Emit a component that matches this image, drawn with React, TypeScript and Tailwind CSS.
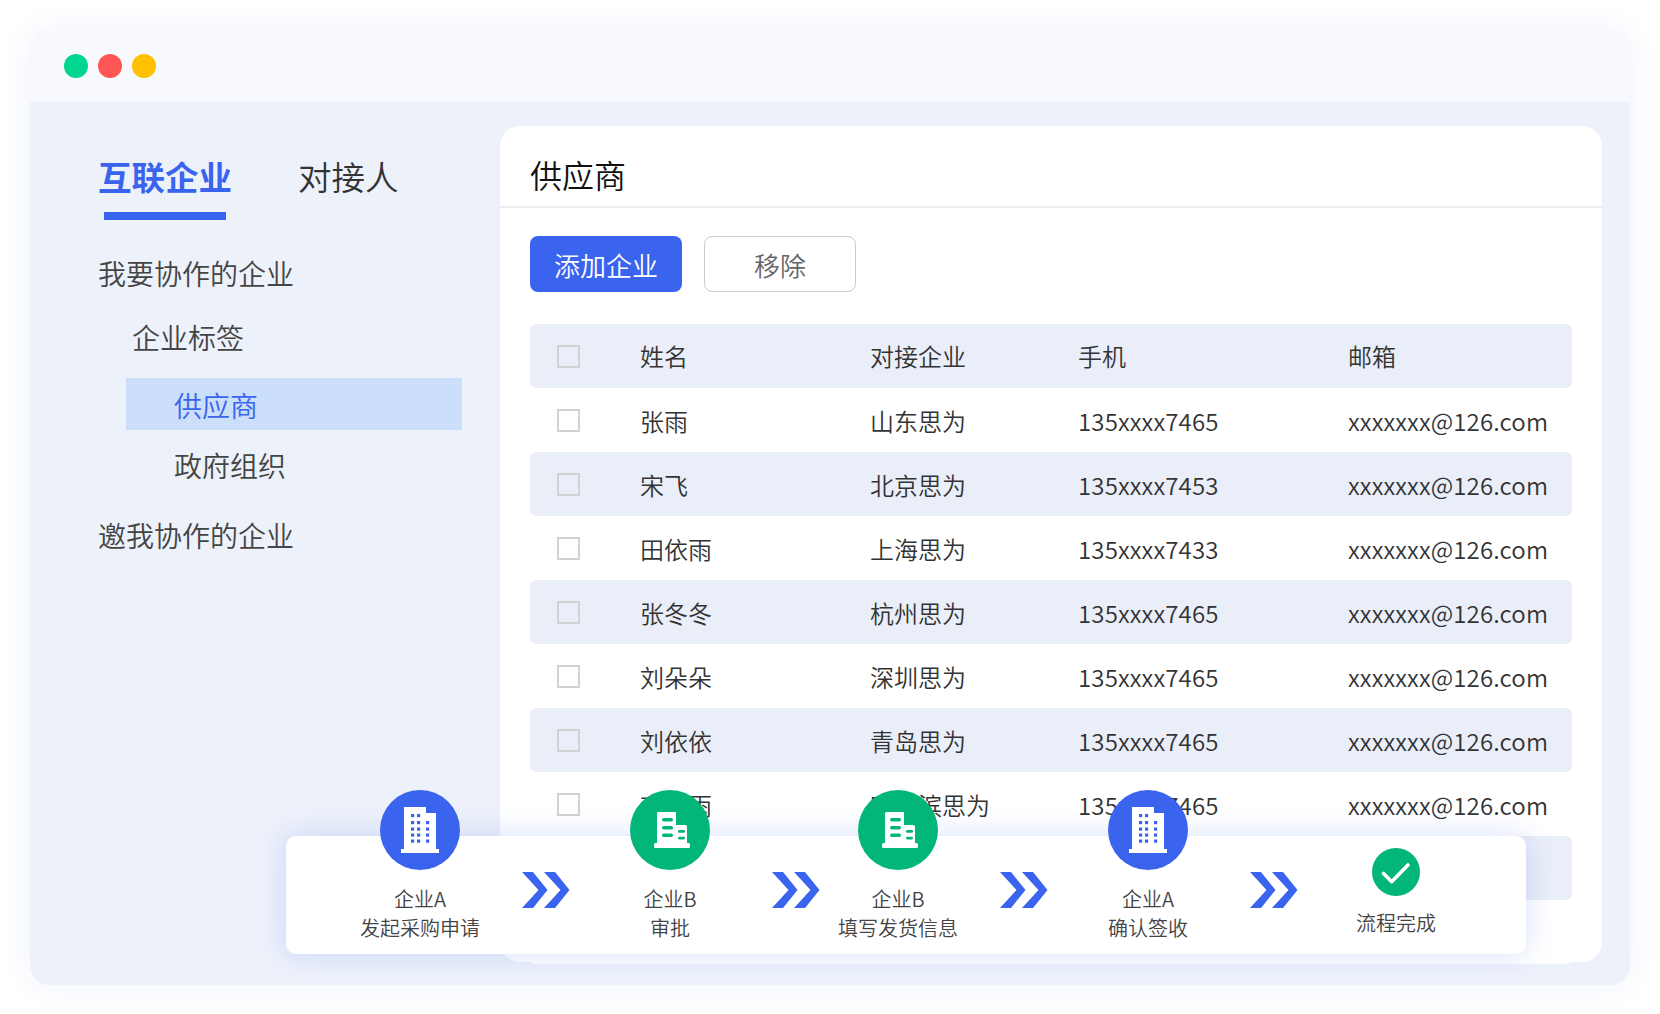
const rows = [
  { name: "张雨", company: "山东思为", phone: "135xxxx7465", email: "xxxxxxx@126.com" },
  { name: "宋飞", company: "北京思为", phone: "135xxxx7453", email: "xxxxxxx@126.com" },
  { name: "田依雨", company: "上海思为", phone: "135xxxx7433", email: "xxxxxxx@126.com" },
  { name: "张冬冬", company: "杭州思为", phone: "135xxxx7465", email: "xxxxxxx@126.com" },
  { name: "刘朵朵", company: "深圳思为", phone: "135xxxx7465", email: "xxxxxxx@126.com" },
  { name: "刘依依", company: "青岛思为", phone: "135xxxx7465", email: "xxxxxxx@126.com" },
  { name: "李依雨", company: "哈尔滨思为", phone: "135xxxx7465", email: "xxxxxxx@126.com" },
];

const rowGrid = "grid grid-cols-[110px_230px_208px_270px_1fr] items-center h-16 rounded-[6px] text-[24px]";

function Checkbox() {
  return <span className="block ml-[27px] w-[23px] h-[23px] border-2 border-[#d2d2d2] bg-transparent" />;
}

function TowerIcon() {
  const cells = [
    [31, 24], [37, 24],
    [31, 31], [37, 31], [46, 31],
    [31, 37.5], [37, 37.5], [46, 37.5],
    [31, 43.5], [37, 43.5], [46, 43.5],
    [31, 49.5], [37, 49.5], [46, 49.5],
  ];
  return (
    <svg viewBox="0 0 80 80" className="w-20 h-20">
      <circle cx="40" cy="40" r="40" fill="#3a64ee" />
      <path d="M24 17h22v6h10v36h3v4H21v-4h3z" fill="#fff" />
      {cells.map(([x, y]) => (
        <rect key={`${x}-${y}`} x={x} y={y} width="3.2" height="3.2" fill="#3a64ee" />
      ))}
    </svg>
  );
}

function OfficeIcon() {
  return (
    <svg viewBox="0 0 80 80" className="w-20 h-20">
      <circle cx="40" cy="40" r="40" fill="#02b578" />
      <path d="M27 23.5a1.5 1.5 0 0 1 1.5-1.5H46v13h9.5a1.5 1.5 0 0 1 1.5 1.5V53h1.5a1.5 1.5 0 0 1 1.5 1.5v2a1.5 1.5 0 0 1-1.5 1.5h-33a1.5 1.5 0 0 1-1.5-1.5v-2a1.5 1.5 0 0 1 1.5-1.5H27z" fill="#fff" />
      <rect x="32" y="28" width="11" height="3.4" rx="1.7" fill="#02b578" />
      <rect x="32" y="36" width="11" height="3.4" rx="1.7" fill="#02b578" />
      <rect x="32" y="43.5" width="11" height="3.6" rx="1.8" fill="#02b578" />
      <rect x="48" y="40" width="7" height="2.7" rx="1.3" fill="#02b578" />
      <rect x="48" y="46.7" width="7" height="2.7" rx="1.3" fill="#02b578" />
    </svg>
  );
}

function Chevrons({ className }: { className: string }) {
  return (
    <svg viewBox="0 0 48 36" className={`w-12 h-9 shrink-0 mt-[36px] ${className}`} fill="#3a64ee">
      <path d="M0 0h11l14.5 18L11 36H0l16.5-18z" />
      <path d="M22 0h11l14.5 18L33 36H22l16.5-18z" />
    </svg>
  );
}

function Step({ icon, lines, className }: { icon: React.ReactNode; lines: string[]; className: string }) {
  return (
    <div className={`w-40 shrink-0 flex flex-col items-center -mt-[46px] ${className}`}>
      {icon}
      <div className="mt-[14px] text-[20px] leading-[29px] text-[#444] text-center whitespace-nowrap">
        {lines.map((l) => (
          <div key={l}>{l}</div>
        ))}
      </div>
    </div>
  );
}

export default function App() {
  return (
    <div className="w-[1660px] h-[1014px] bg-white pt-[30px] pl-[30px] overflow-hidden font-[350] font-['Noto_Sans_CJK_SC','Noto_Sans',sans-serif] text-[#333]">
      <div className="relative w-[1600px] h-[955px] rounded-[20px] overflow-visible bg-[#edf1fa] shadow-[0_0_30px_rgba(58,100,238,0.08)] flex flex-col">
        {/* Title bar */}
        <div className="h-[72px] shrink-0 rounded-t-[20px] bg-[#f7f9fe] flex items-center gap-[10px] pl-[34px]">
          <span className="w-6 h-6 rounded-full bg-[#00d68f]" />
          <span className="w-6 h-6 rounded-full bg-[#ff5555]" />
          <span className="w-6 h-6 rounded-full bg-[#ffc000]" />
        </div>

        <div className="flex flex-1">
          {/* Left nav */}
          <div className="w-[470px] shrink-0 pl-[68px] pt-[54px]">
            <div className="flex gap-[66px] text-[33.5px] leading-[40px]">
              <div className="flex flex-col">
                <span className="font-bold text-[#3a64ee]">互联企业</span>
                <span className="block h-2 mx-[6px] mt-[16px] bg-[#3a64ee]" />
              </div>
              <span>对接人</span>
            </div>
            <div className="text-[28px] leading-[40px] text-[#444]">
              <div className="mt-[33px]">我要协作的企业</div>
              <div className="mt-[24px] pl-[34px]">企业标签</div>
              <div className="mt-[21px] ml-[28px] w-[336px] h-[52px] flex items-center pl-[48px] pt-[2px] bg-[#cbdffb] text-[#3a64ee]">
                供应商
              </div>
              <div className="mt-[15px] pl-[76px]">政府组织</div>
              <div className="mt-[30px]">邀我协作的企业</div>
            </div>
          </div>

          {/* Main card */}
          <div className="w-[1102px] h-[836px] mt-6 bg-white rounded-[20px]">
            <div className="h-[82px] pt-[28px] pl-[30px] border-b-2 border-[#eeeeee] text-[32px] leading-[40px] text-[#111]">
              供应商
            </div>
            <div className="flex gap-[22px] mt-7 ml-[30px]">
              <button className="w-[152px] h-14 rounded-[8px] bg-[#3a64ee] text-white text-[26px]">添加企业</button>
              <button className="w-[152px] h-14 rounded-[8px] border border-[#cccccc] text-[#666] text-[26px]">移除</button>
            </div>
            <div className="mt-8 mx-[30px]">
              <div className={`${rowGrid} bg-[#eaeef8]`}>
                <Checkbox />
                <span>姓名</span>
                <span>对接企业</span>
                <span>手机</span>
                <span>邮箱</span>
              </div>
              {rows.map((r, i) => (
                <div key={r.name} className={`${rowGrid} ${i % 2 === 1 ? "bg-[#eaeef8]" : "bg-white"}`}>
                  <Checkbox />
                  <span className="pt-[2px]">{r.name}</span>
                  <span className="pt-[2px]">{r.company}</span>
                  <span className="pt-[2px] tracking-[0.15px]">{r.phone}</span>
                  <span className="pt-[2px] tracking-[0.15px]">{r.email}</span>
                </div>
              ))}
              <div className="h-16 rounded-[6px] bg-[#eaeef8]" />
              <div className="h-16 rounded-[6px] bg-white" />
            </div>
          </div>
        </div>

        {/* Process strip over the card */}
        <div className="absolute left-[256px] top-[806px] w-[1240px] h-[118px] rounded-[10px] bg-white shadow-[0_0_30px_rgba(58,100,238,0.2)] flex items-start pl-[54px]">
          <Step icon={<TowerIcon />} lines={["企业A", "发起采购申请"]} className="" />
          <Chevrons className="ml-[22px]" />
          <Step icon={<OfficeIcon />} lines={["企业B", "审批"]} className="ml-5" />
          <Chevrons className="ml-[22px]" />
          <Step icon={<OfficeIcon />} lines={["企业B", "填写发货信息"]} className="-ml-[2px]" />
          <Chevrons className="ml-[22px]" />
          <Step icon={<TowerIcon />} lines={["企业A", "确认签收"]} className="ml-5" />
          <Chevrons className="ml-[22px]" />
          <div className="w-40 shrink-0 ml-[18px] mt-3 flex flex-col items-center">
            <svg viewBox="0 0 48 48" className="w-12 h-12">
              <circle cx="24" cy="24" r="24" fill="#02b578" />
              <path d="M11.5 25.5l8.2 8.2L36 17" fill="none" stroke="#fff" strokeWidth="3.6" strokeLinecap="round" strokeLinejoin="round" />
            </svg>
            <div className="mt-3 text-[20px] leading-[29px] text-[#444] whitespace-nowrap">流程完成</div>
          </div>
        </div>
      </div>
    </div>
  );
}
